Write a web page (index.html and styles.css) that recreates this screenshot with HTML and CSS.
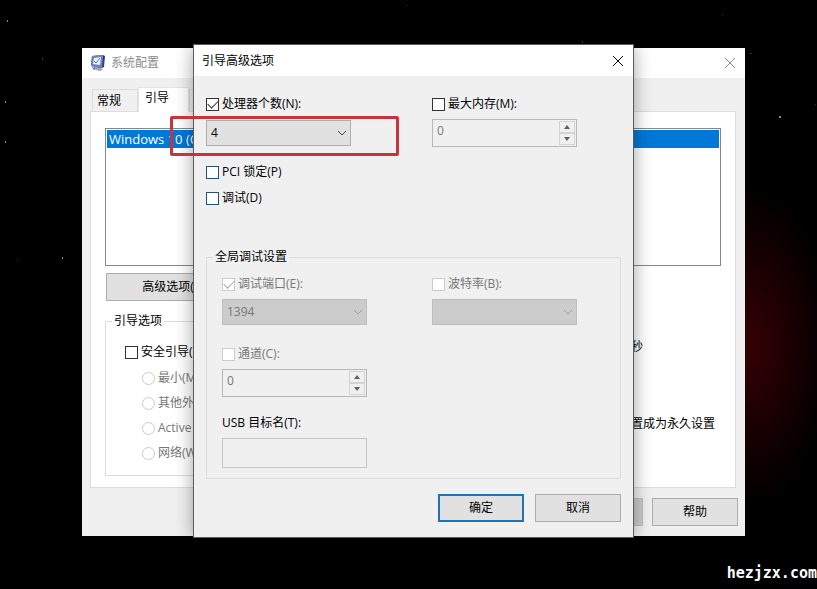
FILE: index.html
```html
<!DOCTYPE html>
<html lang="zh-CN">
<head>
<meta charset="utf-8">
<meta name="viewport" content="width=device-width, initial-scale=1">
<title>系统配置</title>
<link rel="stylesheet" href="styles.css">
</head>
<body>
<main class="desktop">
  <svg class="stars" width="817" height="589" viewBox="0 0 817 589" aria-hidden="true">
    <g fill="#8a8f96">
      <rect x="7" y="20" width="1" height="2"/><rect x="5" y="141" width="1" height="2"/>
      <rect x="5" y="101" width="1" height="2"/>
      <rect x="779" y="116" width="2" height="2"/><rect x="62" y="257" width="1" height="2"/>
    </g>
    <g fill="#34383c">
      <rect x="42" y="58" width="1" height="2"/><rect x="17" y="259" width="1" height="1"/>
      <rect x="750" y="53" width="2" height="1"/><rect x="582" y="41" width="1" height="2"/>
      <rect x="815" y="104" width="1" height="1"/><rect x="406" y="5" width="1" height="1"/>
      <rect x="722" y="14" width="1" height="1"/>
    </g>
  </svg>

  <section class="window config" aria-label="系统配置">
    <header class="titlebar titlebar-inactive">
      <svg class="app-icon" width="16" height="17" viewBox="0 0 16 17" aria-hidden="true">
        <path d="M4 12l6 0 3 3-4 1-5-2z" fill="#a3a4b0"/>
        <path d="M2 1l11-1 2 1-1 11-2 1-11-2z" fill="#2f3d80"/>
        <path d="M2 1l11-1-1 13-11-2z" fill="#7282bd"/>
        <path d="M4 3l7-1-1 8-7-1z" fill="#e8f2ff"/>
        <path d="M4 6l2 2 4-5" fill="none" stroke="#4771c8"/>
        <path d="M2 12l3 1 0 2-2-1z" fill="#5967a8"/>
      </svg>
      <h1 class="title">系统配置</h1>
      <button class="close" type="button" aria-label="关闭">
        <svg width="12" height="12" viewBox="0 0 12 12"><path d="M1 1l10 10M11 1L1 11"/></svg>
      </button>
    </header>
    <div class="config-body">
      <nav class="tabs" role="tablist">
        <button class="tab" type="button" role="tab">常规</button>
        <button class="tab tab-active" type="button" role="tab" aria-selected="true">引导</button>
        <button class="tab" type="button" role="tab" aria-label="服务"></button>
      </nav>
      <div class="page">
        <ul class="boot-list">
          <li class="boot-entry">Windows 10 (C:\Windows)</li>
        </ul>
        <button class="button button-wide" type="button">高级选项(V)...</button>
        <div class="boot-options">
          <fieldset class="group boot-group">
            <legend>引导选项</legend>
            <label class="option"><input class="check" type="checkbox">安全引导(F)</label>
            <div class="suboptions">
              <label class="option muted"><input class="radio" type="radio" name="safe" disabled>最小(M)</label>
              <label class="option muted"><input class="radio" type="radio" name="safe" disabled>其他外壳</label>
              <label class="option muted"><input class="radio" type="radio" name="safe" disabled>Active</label>
              <label class="option muted"><input class="radio" type="radio" name="safe" disabled>网络(W)</label>
            </div>
          </fieldset>
          <div class="boot-side">
            <span class="unit">秒</span>
            <span class="permanent">置成为永久设置</span>
          </div>
        </div>
      </div>
      <footer class="config-actions">
        <button class="button button-disabled" type="button" aria-label="应用" disabled></button>
        <button class="button" type="button">帮助</button>
      </footer>
    </div>
  </section>

  <section class="window dialog" role="dialog" aria-label="引导高级选项">
    <header class="titlebar">
      <h2 class="title">引导高级选项</h2>
      <button class="close" type="button" aria-label="关闭">
        <svg width="12" height="12" viewBox="0 0 12 12"><path d="M1 1l10 10M11 1L1 11"/></svg>
      </button>
    </header>
    <form class="dialog-body">
      <div class="fields fields-top">
        <div class="field">
          <label class="option"><input class="check" type="checkbox" checked>处理器个数(N):</label>
          <div class="combo">
            <select aria-label="处理器个数"><option>4</option></select>
            <svg width="10" height="6" viewBox="0 0 10 6" aria-hidden="true"><path d="M1 1l4 4 4-4"/></svg>
          </div>
        </div>
        <div class="field">
          <label class="option"><input class="check" type="checkbox">最大内存(M):</label>
          <div class="spinner">
            <input type="text" value="0" aria-label="最大内存" disabled>
            <div class="steps">
              <button type="button" aria-label="增加" disabled><svg width="6" height="4" viewBox="0 0 6 4"><path d="M0 4l3-4 3 4z"/></svg></button>
              <button type="button" aria-label="减少" disabled><svg width="6" height="4" viewBox="0 0 6 4"><path d="M0 0l3 4 3-4z"/></svg></button>
            </div>
          </div>
        </div>
      </div>
      <div class="toggles">
        <label class="option"><input class="check check-blue" type="checkbox">PCI 锁定(P)</label>
        <label class="option"><input class="check check-blue" type="checkbox">调试(D)</label>
      </div>
      <fieldset class="group debug-group">
        <legend>全局调试设置</legend>
        <div class="fields">
          <div class="field">
            <label class="option muted"><input class="check" type="checkbox" checked disabled>调试端口(E):</label>
            <div class="combo combo-disabled">
              <select aria-label="调试端口" disabled><option>1394</option></select>
              <svg width="10" height="6" viewBox="0 0 10 6" aria-hidden="true"><path d="M1 1l4 4 4-4"/></svg>
            </div>
          </div>
          <div class="field">
            <label class="option muted"><input class="check" type="checkbox" disabled>波特率(B):</label>
            <div class="combo combo-disabled">
              <select aria-label="波特率" disabled><option></option></select>
              <svg width="10" height="6" viewBox="0 0 10 6" aria-hidden="true"><path d="M1 1l4 4 4-4"/></svg>
            </div>
          </div>
        </div>
        <div class="field channel">
          <label class="option muted"><input class="check" type="checkbox" disabled>通道(C):</label>
          <div class="spinner">
            <input type="text" value="0" aria-label="通道" disabled>
            <div class="steps">
              <button type="button" aria-label="增加" disabled><svg width="6" height="4" viewBox="0 0 6 4"><path d="M0 4l3-4 3 4z"/></svg></button>
              <button type="button" aria-label="减少" disabled><svg width="6" height="4" viewBox="0 0 6 4"><path d="M0 0l3 4 3-4z"/></svg></button>
            </div>
          </div>
        </div>
        <div class="field target">
          <label class="option" for="usb-target">USB 目标名(T):</label>
          <input class="textbox" id="usb-target" type="text" disabled>
        </div>
      </fieldset>
      <footer class="dialog-actions">
        <button class="button button-default" type="button">确定</button>
        <button class="button" type="button">取消</button>
      </footer>
    </form>
    <div class="highlight"></div>
  </section>

  <p class="watermark">hezjzx.com</p>
</main>
</body>
</html>
```
FILE: styles.css
```css
* {
  box-sizing: border-box;
}

body {
  margin: 0;
  background: #000;
  color: #000;
  font: 12px/16px "Open Sans", "Noto Sans CJK SC", sans-serif;
}

button,
input,
select {
  margin: 0;
  color: inherit;
  font: inherit;
}

.desktop {
  position: relative;
  min-height: 100vh;
  overflow: hidden;
  background: radial-gradient(ellipse 80px 160px at calc(100% - 65px) 345px, #340004, #1a0002 50%, #000);
}

.stars {
  position: absolute;
  top: 0;
  left: 0;
}

/* Windows */

.window {
  position: absolute;
  background: #f0f0f0;
}

.config {
  top: 48px;
  right: 72px;
  left: 82px;
}

.dialog {
  top: 45px;
  right: 184px;
  left: 194px;
  box-shadow: 0 0 0 1px #5c5c5c, 0 2px 18px rgba(0, 0, 0, 0.4);
}

.titlebar {
  display: flex;
  align-items: center;
  height: 31px;
  padding: 0 9px 0 8px;
  background: #fff;
}

.titlebar-inactive {
  height: 30px;
  color: #8c8c8c;
}

.app-icon {
  margin-right: 5px;
}

.title {
  flex: 1;
  margin: 0;
  font-size: 12px;
  font-weight: 400;
}

.close {
  display: flex;
  padding: 0;
  border: 0;
  background: none;
}

.close svg {
  fill: none;
  stroke: currentColor;
}

/* Shared controls */

.option {
  display: flex;
  align-items: center;
  gap: 3px;
  height: 16px;
  white-space: nowrap;
}

.muted {
  color: #777;
}

.check,
.radio {
  display: grid;
  flex: none;
  place-items: center;
  width: 13px;
  height: 13px;
  border: 1px solid #333;
  background: #fff;
  appearance: none;
}

.check-blue {
  border-color: #24507a;
}

.check:disabled,
.radio:disabled {
  border-color: #ccc;
}

.radio {
  border-radius: 50%;
}

.check:checked::after {
  width: 9px;
  height: 5px;
  margin-bottom: 3px;
  border: solid #333;
  border-width: 0 0 1px 1px;
  content: "";
  transform: rotate(-45deg);
}

.check:disabled:checked::after {
  border-color: #aaa;
}

.button {
  width: 86px;
  height: 28px;
  padding: 0;
  border: 1px solid #adadad;
  background: #e1e1e1;
}

.button-wide {
  display: block;
  width: 144px;
  margin: 7px 0 12px 1px;
}

.button-disabled {
  border-color: #bfbfbf;
  background: #ccc;
}

.button-default {
  border: 2px solid #1b74b8;
}

.group {
  min-width: 0;
  margin: 0;
  border: 1px solid #dcdcdc;
}

.group legend {
  height: 16px;
  padding: 0 2px;
}

/* System configuration window */

.config-body {
  padding: 9px 9px 10px 8px;
}

.tabs {
  display: flex;
  align-items: flex-end;
  padding-left: 2px;
}

.tab {
  width: 46px;
  height: 22px;
  padding: 0 4px;
  border: 1px solid #dcdcdc;
  border-bottom: 0;
  background: #f0f0f0;
  text-align: left;
}

.tab-active {
  position: relative;
  width: 51px;
  height: 25px;
  margin-bottom: -1px;
  padding: 0 6px 4px;
  border-color: #e4e4e4;
  background: #fff;
}

.page {
  padding: 16px 14px 11px;
  border: 1px solid #dcdcdc;
  background: #fff;
}

.boot-list {
  height: 138px;
  margin: 0;
  padding: 1px;
  border: 1px solid #828790;
  list-style: none;
}

.boot-entry {
  padding: 1px 2px;
  background: #0078d7;
  color: #fff;
  font-size: 13px;
}

.boot-options {
  display: flex;
}

.boot-group {
  flex: none;
  width: 50%;
  padding: 15px 0 14px 19px;
}

.boot-group legend {
  margin-left: -13px;
}

.suboptions {
  display: grid;
  gap: 9px;
  margin: 10px 0 0 17px;
}

.boot-side {
  display: flex;
  flex: 1;
  flex-direction: column;
  align-items: flex-end;
  gap: 61px;
  padding: 26px 6px 0 0;
  white-space: nowrap;
}

.unit {
  padding-right: 72px;
}

.config-actions {
  display: flex;
  justify-content: flex-end;
  gap: 9px;
  margin: 10px -2px 0 0;
}

/* Advanced boot options dialog */

.dialog-body {
  padding: 20px 12px 15px;
}

.fields {
  display: grid;
  grid-template-columns: 210px 1fr;
}

.fields-top {
  grid-template-columns: 226px 1fr;
}

.field {
  display: grid;
  justify-items: start;
  align-content: start;
  gap: 7px;
}

.combo {
  position: relative;
  width: 145px;
}

.combo select {
  display: block;
  width: 100%;
  height: 26px;
  padding: 0 4px;
  border: 1px solid #adadad;
  border-radius: 0;
  background: #e1e1e1;
  appearance: none;
}

.fields-top .combo {
  padding-top: 1px;
}

.combo svg {
  position: absolute;
  right: 4px;
  bottom: 10px;
  fill: none;
  stroke: #444;
  pointer-events: none;
}

.combo-disabled select {
  border-color: #bfbfbf;
  background: #ccc;
  color: #777;
  opacity: 1;
}

.combo-disabled svg {
  stroke: #a0a0a0;
}

.spinner {
  display: flex;
  width: 145px;
  height: 28px;
  padding: 1px;
  border: 1px solid #b8b8b8;
  background: #f0f0f0;
}

.spinner input {
  flex: 1;
  min-width: 0;
  padding: 0 3px 4px;
  border: 0;
  background: none;
  color: #777;
}

.steps {
  display: grid;
  width: 16px;
}

.steps button {
  display: grid;
  place-items: center;
  padding: 0;
  border: 1px solid #d4d4d4;
  background: #f0f0f0;
}

.steps svg {
  fill: #606060;
}

.toggles {
  display: grid;
  justify-items: start;
  gap: 10px;
  margin: 17px 0 43px;
}

.debug-group {
  padding: 11px 15px 10px;
}

.debug-group legend {
  margin-left: -9px;
}

.channel {
  margin-top: 21px;
}

.target {
  margin-top: 18px;
}

.textbox {
  width: 145px;
  height: 30px;
  padding: 0 4px;
  border: 1px solid #c6c6c6;
  background: #f0f0f0;
}

.dialog-actions {
  display: flex;
  justify-content: flex-end;
  gap: 11px;
  margin-top: 15px;
}

/* Red callout around the processor count */
.highlight {
  position: absolute;
  top: 71px;
  left: -24px;
  width: 229px;
  height: 40px;
  border: 3px solid #c8343c;
  border-radius: 2px;
  pointer-events: none;
}

.watermark {
  position: absolute;
  right: 0;
  bottom: 8px;
  margin: 0;
  color: #fff;
  font: bold 15px/16px "DejaVu Sans Mono", monospace;
}
```
